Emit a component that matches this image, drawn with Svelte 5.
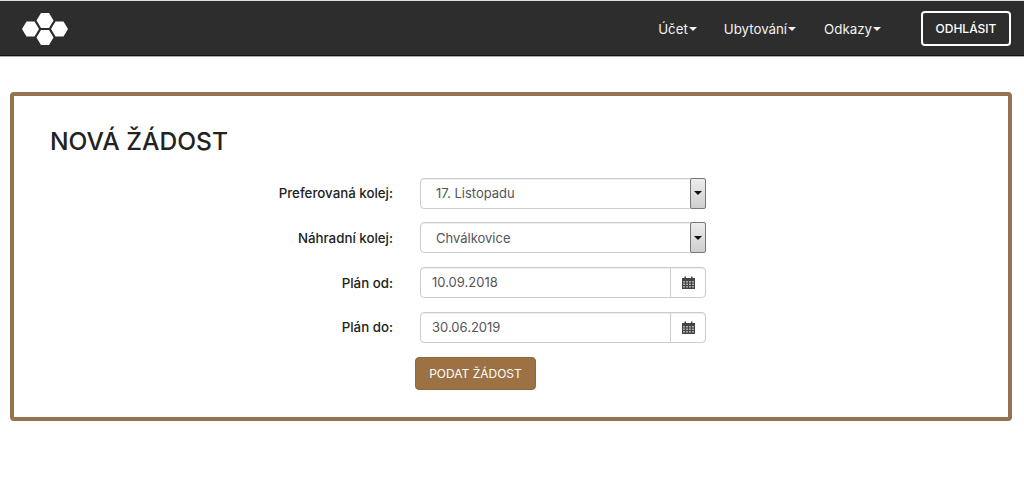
<script>
	let rows = [
		{ label: "Preferovaná kolej:", value: "17. Listopadu", type: "select" },
		{ label: "Náhradní kolej:", value: "Chválkovice", type: "select" },
		{ label: "Plán od:", value: "10.09.2018", type: "date" },
		{ label: "Plán do:", value: "30.06.2019", type: "date" }
	];
	let menu = ["Účet", "Ubytování", "Odkazy"];
</script>

<nav class="navbar">
	<svg class="logo" width="46" height="32" viewBox="0 0 46 32">
		<polygon fill="#fff" points="0,16 4.5,8.5 12.5,8.5 17,16 12.5,23.5 4.5,23.5" />
		<polygon fill="#fff" points="14.5,7.5 19,0 27,0 31.5,7.5 27,15 19,15" />
		<polygon fill="#fff" points="14.5,24.5 19,17 27,17 31.5,24.5 27,32 19,32" />
		<polygon fill="#fff" points="29,16 33.5,8.5 41.5,8.5 46,16 41.5,23.5 33.5,23.5" />
	</svg>
	<div class="nav-right">
		{#each menu as item}
			<span class="nav-item">{item}<i class="caret"></i></span>
		{/each}
		<button class="logout">ODHLÁSIT</button>
	</div>
</nav>

<main class="card">
	<h1>NOVÁ ŽÁDOST</h1>
	<form class="form">
		{#each rows as row}
			<div class="row">
				<label>{row.label}</label>
				{#if row.type == "select"}
					<div class="control select">
						<span class="select-value">{row.value}</span>
						<span class="arrow"><i></i></span>
					</div>
				{:else}
					<div class="control date">
						<span class="date-value">{row.value}</span>
						<span class="addon">
							<svg width="13" height="13" viewBox="0 0 13 13">
								<path fill="#444" d="M0 2h2.5V0.5h1.5V2h5V0.5h1.5V2H13v11H0z" />
								<path fill="#aaa" d="M1 5h2v1.5H1zM4 5h2v1.5H4zM7 5h2v1.5H7zM10 5h2v1.5h-2zM1 7.5h2V9H1zM4 7.5h2V9H4zM7 7.5h2V9H7zM10 7.5h2V9h-2zM1 10h2v1.5H1zM4 10h2v1.5H4zM7 10h2v1.5H7zM10 10h2v1.5h-2z" />
							</svg>
						</span>
					</div>
				{/if}
			</div>
		{/each}
		<div class="submit-row">
			<button type="button" class="submit">PODAT ŽÁDOST</button>
		</div>
	</form>
</main>

<style>
	:global(body) {
		background: #fff;
		font-family: "Inter", "Open Sans", sans-serif;
	}

	.navbar {
		display: flex;
		align-items: center;
		justify-content: space-between;
		box-sizing: border-box;
		height: 57px;
		padding: 0 13px 0 22px;
		background: #2d2d2d;
		border-top: 1px solid #ddd;
		border-bottom: 1px solid #aaa;
		box-shadow: inset 0 -1px 0 #111;
	}

	.logo {
		display: block;
	}

	.nav-right {
		display: flex;
		align-items: center;
	}

	.nav-item {
		display: flex;
		align-items: center;
		color: #f2f2f2;
		font-size: 13.3px;
		margin-right: 27px;
	}

	.nav-item:nth-child(3) {
		margin-left: 1px;
		margin-right: 26px;
	}

	.caret {
		width: 0;
		height: 0;
		margin-left: 1px;
		border-left: 4px solid transparent;
		border-right: 4px solid transparent;
		border-top: 4px solid #f2f2f2;
	}

	.logout {
		width: 90px;
		height: 35px;
		margin-left: 14px;
		padding: 0;
		background: transparent;
		border: 2px solid #fff;
		border-radius: 4px;
		color: #fff;
		font: 500 12px "Inter", sans-serif;
	}

	.card {
		box-sizing: border-box;
		width: 1002px;
		height: 329px;
		margin: 35px 0 0 10px;
		padding: 30px 36px 0;
		border: 4px solid #957352;
		border-radius: 4px;
	}

	h1 {
		margin: 0;
		color: #222;
		font-size: 24.6px;
		font-weight: 500;
		line-height: 30px;
	}

	.form {
		display: flex;
		flex-direction: column;
		gap: 13.6px;
		margin-top: 21.85px;
	}

	.row {
		display: flex;
		align-items: center;
		height: 31px;
	}

	label {
		width: 343px;
		color: #222;
		font-size: 13.3px;
		font-weight: 500;
		text-align: right;
	}

	.control {
		display: flex;
		box-sizing: border-box;
		width: 286px;
		height: 31px;
		margin-left: 27px;
		color: #555;
		font-size: 13px;
		background: #fff;
		border: 1px solid #ccc;
		border-radius: 4px;
		box-shadow: inset 0 1px 1px rgba(0, 0, 0, 0.075);
	}

	.select {
		align-items: center;
		justify-content: space-between;
	}

	.select-value {
		padding-left: 15px;
	}

	.arrow {
		display: flex;
		align-items: center;
		justify-content: center;
		box-sizing: border-box;
		width: 16px;
		height: 31px;
		margin-right: -1px;
		background: linear-gradient(#ececec, #cfcfcf);
		border: 1px solid #777;
		border-radius: 2px;
	}

	.arrow i {
		width: 0;
		height: 0;
		border-left: 4px solid transparent;
		border-right: 4px solid transparent;
		border-top: 4px solid #111;
	}

	.date {
		align-items: stretch;
	}

	.date-value {
		flex: 1;
		padding-left: 11px;
		line-height: 29px;
	}

	.addon {
		display: flex;
		align-items: center;
		justify-content: center;
		width: 34px;
		border-left: 1px solid #ccc;
	}

	.submit-row {
		padding-left: 365px;
		margin-top: 1px;
	}

	.submit {
		width: 121px;
		height: 33px;
		padding: 0;
		background: #9c7245;
		border: 1px solid #8f683e;
		border-radius: 4px;
		color: #fff;
		font: 400 12px "Inter", sans-serif;
	}
</style>
